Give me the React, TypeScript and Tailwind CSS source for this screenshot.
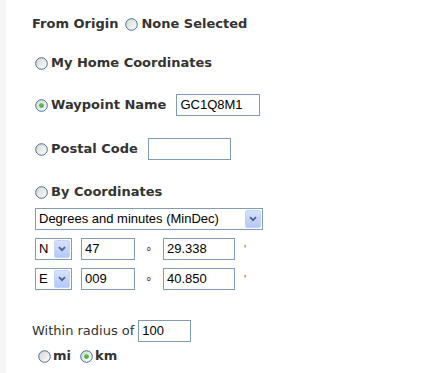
import React from "react";

function Radio({ checked = false }: { checked?: boolean }) {
  return (
    <svg width="13" height="13" viewBox="0 0 13 13" className="shrink-0">
      <defs>
        <linearGradient id={checked ? "rg1" : "rg0"} x1="0" y1="0" x2="1" y2="1">
          <stop offset="0" stopColor="#d4d4ce" />
          <stop offset="1" stopColor="#ffffff" />
        </linearGradient>
        <radialGradient id="dot" cx="0.5" cy="0.4" r="0.6">
          <stop offset="0" stopColor="#5fd35f" />
          <stop offset="1" stopColor="#21a121" />
        </radialGradient>
      </defs>
      <circle cx="6.5" cy="6.5" r="5.8" fill={`url(#${checked ? "rg1" : "rg0"})`} stroke="#1c5180" strokeOpacity="0.8" strokeWidth="1" />
      {checked && <circle cx="6.5" cy="6.5" r="2.3" fill="url(#dot)" />}
    </svg>
  );
}

function Input({ value = "", w }: { value?: string; w: string }) {
  return (
    <div className={`${w} h-[22px] border border-[#7f9db9] bg-white flex items-center pl-[3px] text-[13px] text-black`} style={{ fontFamily: '"Liberation Sans", Arial, sans-serif' }}>
      {value}
    </div>
  );
}

function Arrow() {
  return (
    <div className="w-[16px] h-[18px] rounded-[2px] border border-[#c3d3fd] bg-gradient-to-b from-[#d6e2fd] to-[#b3c8f7] flex items-center justify-center">
      <svg width="8" height="6" viewBox="0 0 8 6">
        <path d="M1 1.2 L4 4.2 L7 1.2" fill="none" stroke="#4d6185" strokeWidth="1.8" />
      </svg>
    </div>
  );
}

function Select({ value, w }: { value: string; w: string }) {
  return (
    <div className={`${w} h-[22px] border border-[#7f9db9] bg-white flex items-center justify-between pl-[3px] pr-[1px] text-[13px] text-black`} style={{ fontFamily: '"Liberation Sans", Arial, sans-serif' }}>
      <span>{value}</span>
      <Arrow />
    </div>
  );
}

export default function App() {
  const bold = "font-bold text-[13px] text-[#333333]";
  return (
    <div className="flex w-[425px] h-[373px] bg-white" style={{ fontFamily: '"DejaVu Sans", Verdana, sans-serif' }}>
      <div className="w-[6px] bg-[#f5f5f5] shrink-0" />
      <div className="flex flex-col pl-[26px] pt-[14px]">
        <div className="h-[20px] flex items-center">
          <span className={bold}>From Origin</span>
          <span className="ml-[7px]"><Radio /></span>
          <span className={`${bold} ml-[3px]`}>None Selected</span>
        </div>
        <div className="h-[20px] mt-[19px] flex items-center pl-[3px]">
          <Radio />
          <span className={`${bold} ml-[3px]`}>My Home Coordinates</span>
        </div>
        <div className="h-[22px] mt-[21px] flex items-center pl-[3px]">
          <Radio checked />
          <span className={`${bold} ml-[3px]`}>Waypoint Name</span>
          <div className="ml-[10px]"><Input value="GC1Q8M1" w="w-[84px]" /></div>
        </div>
        <div className="h-[22px] mt-[22px] flex items-center pl-[3px]">
          <Radio />
          <span className={`${bold} ml-[3px]`}>Postal Code</span>
          <div className="ml-[10px]"><Input w="w-[83px]" /></div>
        </div>
        <div className="h-[20px] mt-[22px] flex items-center pl-[3px]">
          <Radio />
          <span className={`${bold} ml-[3px]`}>By Coordinates</span>
        </div>
        <div className="mt-[6px] pl-[3px]">
          <Select value="Degrees and minutes (MinDec)" w="w-[228px]" />
        </div>
        {[
          ["N", "47", "29.338"],
          ["E", "009", "40.850"],
        ].map(([d, a, b]) => (
          <div key={d} className="h-[22px] mt-[8px] flex items-center pl-[3px]">
            <Select value={d} w="w-[37px]" />
            <div className="ml-[9px]"><Input value={a} w="w-[54px]" /></div>
            <span className="w-[28px] text-center text-[12px] text-[#555]" style={{ fontFamily: '"Liberation Sans", Arial, sans-serif' }}>∘</span>
            <Input value={b} w="w-[72px]" />
            <span className="ml-[9px] text-[11px] text-[#555]" style={{ fontFamily: '"Liberation Sans", Arial, sans-serif' }}>'</span>
          </div>
        ))}
        <div className="h-[21px] mt-[30px] flex items-center">
          <span className="text-[13px] text-[#333333]">Within radius of</span>
          <div className="ml-[4px]"><Input value="100" w="w-[53px]" /></div>
        </div>
        <div className="h-[20px] mt-[5px] flex items-center pl-[6px]">
          <Radio />
          <span className={`${bold} ml-[2px]`}>mi</span>
          <span className="ml-[9px]"><Radio checked /></span>
          <span className={`${bold} ml-[2px]`}>km</span>
        </div>
      </div>
    </div>
  );
}
